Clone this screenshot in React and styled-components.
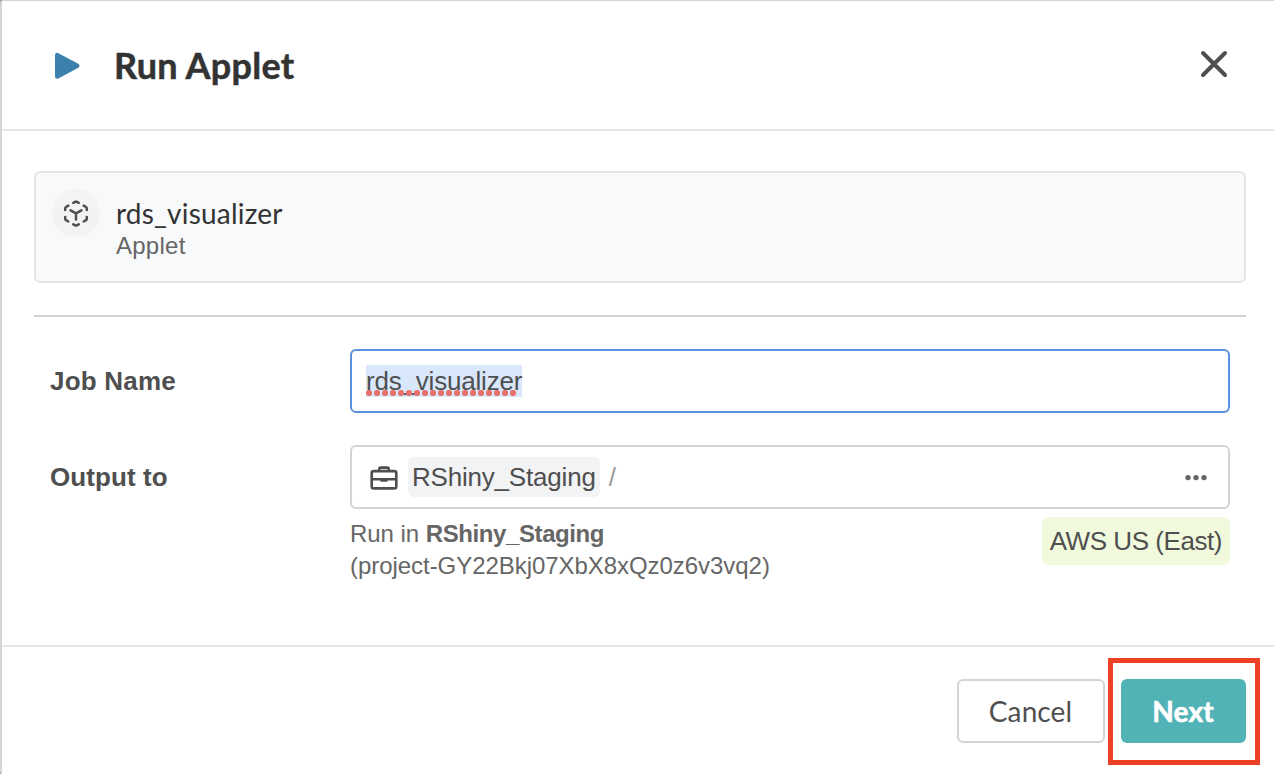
import React from "react";
import styled, { createGlobalStyle } from "styled-components";

const GlobalStyle = createGlobalStyle`
  *, *::before, *::after { box-sizing: border-box; }
  html, body { margin: 0; padding: 0; background: #8a8a90; overflow: hidden; }
`;

const sans = `"Liberation Sans", Arial, sans-serif`;
const lato = `Lato, "Liberation Sans", sans-serif`;

const Dialog = styled.main`
  width: 1274px;
  height: 774px;
  display: flex;
  flex-direction: column;
  background: #fff;
  border-left: 2px solid #d4d4d4;
  border-top: 1px solid #d4d4d4;
  border-radius: 3px 0 0 2px;
  font-family: ${sans};
  color: #4f4f4f;
`;

const Header = styled.header`
  height: 130px;
  flex: none;
  display: flex;
  align-items: center;
  padding: 0 44px 0 52px;
  border-bottom: 2px solid #e4e4e4;
`;

const Title = styled.h1`
  margin: 0 0 0 30px;
  flex: 1;
  font: 700 36px/48px ${lato};
  letter-spacing: 0.25px;
  -webkit-text-stroke: 0.5px #333;
  color: #333;
`;

const IconButton = styled.button`
  display: flex;
  padding: 0;
  border: 0;
  background: none;
`;

const CloseButton = styled(IconButton)`
  margin-bottom: 2px;
`;

const Content = styled.section`
  height: 514px;
  flex: none;
  padding: 40px 28px 0 32px;
`;

const AppCard = styled.div`
  height: 112px;
  display: flex;
  gap: 16px;
  padding: 16px;
  border: 2px solid #e4e5e6;
  border-radius: 6px;
  background: #f8f9fb;
`;

const Avatar = styled.span`
  width: 48px;
  height: 48px;
  flex: none;
  display: grid;
  place-items: center;
  border-radius: 50%;
  background: #f2f3f4;
`;

const AppName = styled.div`
  padding-top: 7px;
  font: 400 28px/34px ${lato};
  letter-spacing: 0.2px;
  color: #333;
`;

const AppKind = styled.div`
  padding-top: 2px;
  font-size: 24px;
  line-height: 28px;
  letter-spacing: 0.25px;
  color: #666;
`;

const Divider = styled.hr`
  height: 2px;
  margin: 32px 0;
  border: 0;
  background: #d4d4d4;
`;

const FormRow = styled.div`
  display: grid;
  grid-template-columns: 300px 880px;
  padding-left: 16px;
  margin-bottom: 32px;
`;

const Label = styled.label`
  font-size: 26px;
  font-weight: 700;
  line-height: 64px;
  letter-spacing: ${(p) => p.$tracking || "0"};
`;

const Field = styled.div`
  height: 64px;
  display: flex;
  align-items: center;
  padding: 0 14px;
  border: 2px solid ${(p) => (p.$focused ? "#5a90dc" : "#d4d4d4")};
  border-radius: 6px;
  font-size: 26px;
  line-height: 32px;
`;

const Selection = styled.span`
  position: relative;
  height: 32px;
  background: #d8e7fa;
  letter-spacing: -0.2px;
`;

const SpellingMark = styled.span`
  position: absolute;
  left: 0;
  top: 25px;
  width: 152px;
  height: 6px;
  background: radial-gradient(circle at 3px 3px, #e9736c 2.8px, transparent 3.4px) 0 0 / 8px 6px repeat-x;
`;

const Project = styled.span`
  height: 40px;
  margin-left: 10px;
  padding: 0 4px;
  border-radius: 6px;
  background: #f2f3f5;
  line-height: 40px;
  letter-spacing: -0.2px;
`;

const Slash = styled.span`
  flex: 1;
  margin-left: 9px;
  color: #999;
`;

const Details = styled.div`
  display: flex;
  justify-content: space-between;
  padding-top: 8px;
`;

const RunTarget = styled.div`
  padding-top: 1px;
  font-size: 24px;
  line-height: 32px;
  color: #666;
`;

const Line = styled.div`
  letter-spacing: -0.05px;

  b {
    letter-spacing: -0.4px;
  }
`;

const Region = styled.span`
  height: 48px;
  padding: 0 8px;
  border-radius: 6px;
  background: #f1fadd;
  font-size: 26px;
  line-height: 48px;
  letter-spacing: -0.45px;
`;

const Footer = styled.footer`
  flex: 1;
  display: flex;
  justify-content: flex-end;
  gap: 16px;
  padding: 32px 28px 0 0;
  border-top: 2px solid #e4e4e4;
`;

const Button = styled.button`
  width: ${(p) => (p.$primary ? "125px" : "148px")};
  height: 64px;
  padding: 0 1px 0 0;
  border: ${(p) => (p.$primary ? "0" : "2px solid #d4d4d4")};
  border-radius: 6px;
  background: ${(p) => (p.$primary ? "#52b3b7" : "#fff")};
  color: ${(p) => (p.$primary ? "#fff" : "#4f4f4f")};
  font: ${(p) => (p.$primary ? 700 : 400)} 28px/34px ${lato};
  letter-spacing: ${(p) => (p.$primary ? "0.2px" : "0.1px")};
  -webkit-text-stroke: ${(p) => (p.$primary ? "0.6px #fff" : "0")};
`;

const Highlighted = styled.div`
  position: relative;
  height: 64px;

  &::after {
    content: "";
    position: absolute;
    inset: -21px -14px -22px -13px;
    border: 5px solid #ed4025;
    pointer-events: none;
  }
`;

const PlayIcon = () => (
  <svg width="30" height="30" viewBox="0 0 30 30">
    <path d="M3.3 5.2v21.2L23.2 15.8z" fill="#3c80ae" stroke="#3c80ae" strokeWidth="4.6" strokeLinejoin="round" />
  </svg>
);

const CloseIcon = () => (
  <svg width="32" height="32" viewBox="0 0 32 32" fill="none" stroke="#4f4f4f" strokeWidth="4" strokeLinecap="round">
    <path d="M5 5l22 22M27 5L5 27" />
  </svg>
);

const CubeIcon = () => (
  <svg width="28" height="28" viewBox="0 0 28 28" fill="none" stroke="#4f4f4f" strokeWidth="2.5" strokeLinecap="round" strokeLinejoin="round">
    <path d="M11.3 3.8L13.2 2.8q.8-.4 1.6 0L16.7 3.8M21.7 6.6L24 8q.8.5.8 1.4V11M24.8 18v1.8q0 .9-.8 1.4l-2.3 1.3M16.7 25.4l-1.9 1q-.8.4-1.6 0l-1.9-1M6.3 22.5L4 21.2q-.8-.5-.8-1.4V18M3.2 11V9.4Q3.2 8.5 4 8l2.3-1.4M8.6 11.3L14 14.4l5.4-3.1M14 14.4v6.2" />
  </svg>
);

const BriefcaseIcon = () => (
  <svg width="28" height="28" viewBox="0 0 28 28" fill="none" stroke="#4f4f4f" strokeWidth="2.6" strokeLinejoin="round">
    <rect x="1.7" y="8.1" width="24.6" height="17.3" rx="2" />
    <path d="M9.3 8V5.8q0-1.2 1.2-1.2h7q1.2 0 1.2 1.2V8M2 16.2h24" />
    <path d="M10 16.5h8v.6q0 1.6-1.6 1.6h-4.8q-1.6 0-1.6-1.6z" fill="#4f4f4f" stroke="none" />
  </svg>
);

const MoreIcon = () => (
  <svg width="22" height="8" viewBox="0 0 22 8" fill="#666">
    <circle cx="3" cy="4.6" r="2.7" />
    <circle cx="11" cy="4.6" r="2.7" />
    <circle cx="19" cy="4.6" r="2.7" />
  </svg>
);

const MoreButton = styled(IconButton)`
  margin-right: 7px;
`;

const LeadIcon = styled.span`
  display: flex;
  margin-left: 4px;
`;

export default function App() {
  return (
    <>
      <GlobalStyle />
      <Dialog>
        <Header>
          <PlayIcon />
          <Title>Run Applet</Title>
          <CloseButton aria-label="Close"><CloseIcon /></CloseButton>
        </Header>
        <Content>
          <AppCard>
            <Avatar><CubeIcon /></Avatar>
            <div>
              <AppName>rds_visualizer</AppName>
              <AppKind>Applet</AppKind>
            </div>
          </AppCard>
          <Divider />
          <FormRow>
            <Label $tracking="0.22px">Job Name</Label>
            <Field $focused>
              <Selection>rds_visualizer<SpellingMark /></Selection>
            </Field>
          </FormRow>
          <FormRow>
            <Label $tracking="0.08px">Output to</Label>
            <div>
              <Field>
                <LeadIcon><BriefcaseIcon /></LeadIcon>
                <Project>RShiny_Staging</Project>
                <Slash>/</Slash>
                <MoreButton aria-label="More"><MoreIcon /></MoreButton>
              </Field>
              <Details>
                <RunTarget>
                  <Line>Run in <b>RShiny_Staging</b></Line>
                  <Line>(project-GY22Bkj07XbX8xQz0z6v3vq2)</Line>
                </RunTarget>
                <Region>AWS US (East)</Region>
              </Details>
            </div>
          </FormRow>
        </Content>
        <Footer>
          <Button>Cancel</Button>
          <Highlighted><Button $primary>Next</Button></Highlighted>
        </Footer>
      </Dialog>
    </>
  );
}
